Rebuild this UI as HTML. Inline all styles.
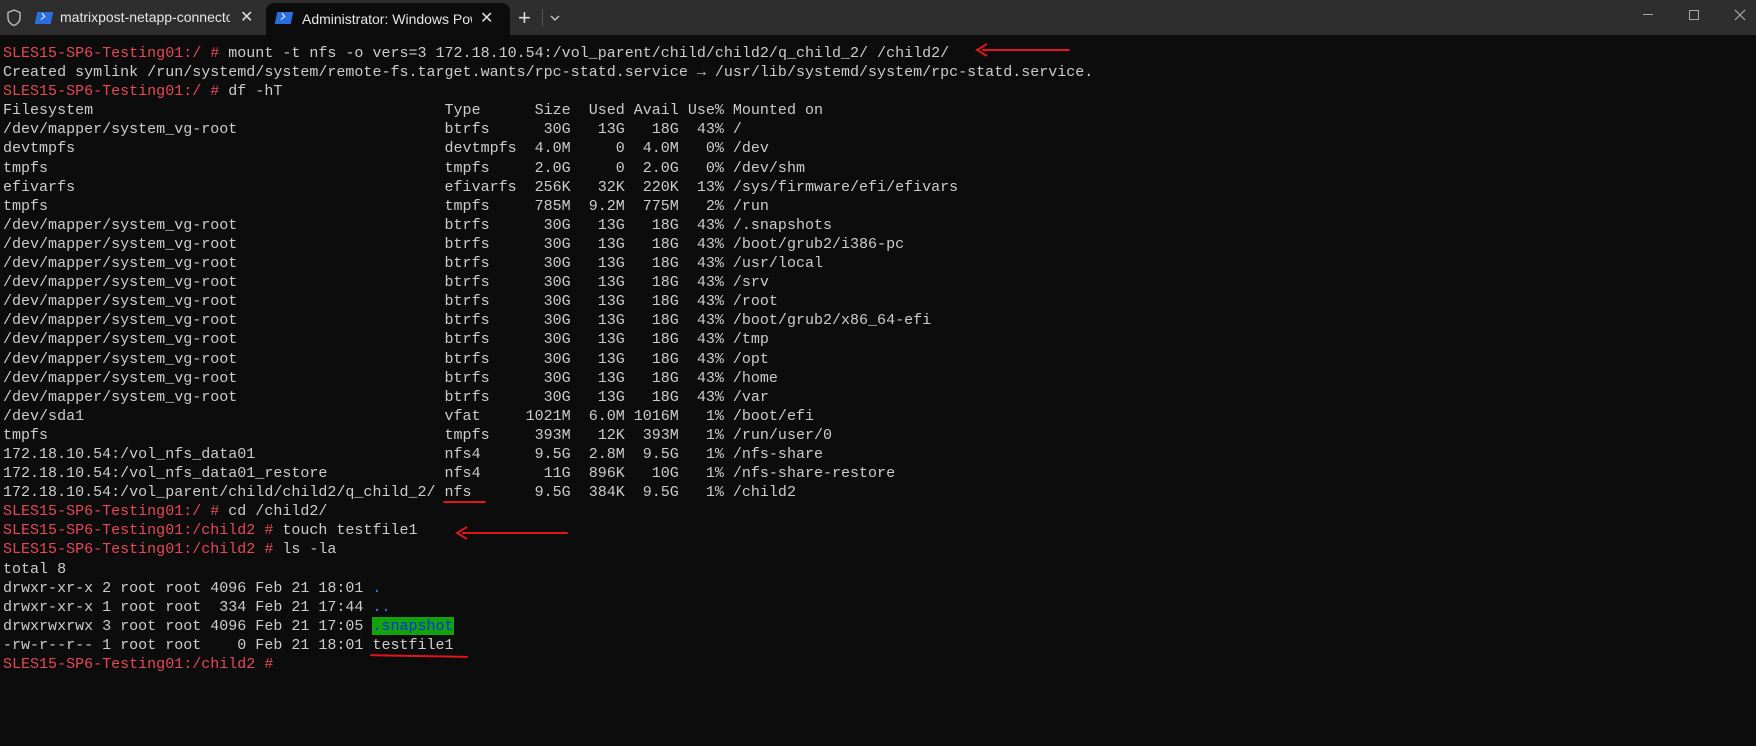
<!DOCTYPE html><html><head><meta charset="utf-8"><style>
body{margin:0;width:1756px;height:746px;background:#0c0c0c;overflow:hidden;font-family:"Liberation Sans",sans-serif;position:relative}
.bar{position:absolute;left:0;top:0;width:1756px;height:35px;background:#2e2e2e}
.tab{position:absolute;top:0;height:35px;color:#e6e6e6;font-size:14px;line-height:35px}
.act{background:#0c0c0c;border-radius:8px 8px 0 0;top:3px;height:32px;line-height:32px}
.ps{position:absolute;width:16px;height:12px;background:#2a6de0;transform:skewX(-12deg);top:12px}
.ps:after{content:"";position:absolute;left:3px;top:2px;width:4px;height:4px;border-right:1.5px solid #fff;border-bottom:1.5px solid #fff;transform:rotate(-45deg)}
pre{position:absolute;left:3px;top:44px;margin:0;font-family:"Liberation Mono",monospace;font-size:15.02px;line-height:19.1px;color:#cccccc}
.r{color:#e74856}.b{color:#3b78ff}.s{background:#13a10e;color:#0037da}
.ann{position:absolute;background:#e0151b;height:2px;border-radius:1px}
</style></head><body>
<div class="bar"></div>
<svg style="position:absolute;left:6px;top:9px" width="16" height="18" viewBox="0 0 16 18"><path d="M8 1L2 3.5V9c0 3.5 2.6 6.3 6 7.5 3.4-1.2 6-4 6-7.5V3.5z" fill="none" stroke="#bbb" stroke-width="1.4"/></svg>
<div class="tab" style="left:34px;width:228px"><div class="ps" style="left:2px"></div><span style="position:absolute;left:26px;white-space:nowrap;width:170px;overflow:hidden">matrixpost-netapp-connector(</span><span style="position:absolute;left:206px;color:#ddd;font-size:16px">✕</span></div>
<div class="tab act" style="left:266px;width:244px"><div class="ps" style="left:10px;top:9px"></div><span style="position:absolute;left:36px;white-space:nowrap;width:170px;overflow:hidden">Administrator: Windows Powe</span><span style="position:absolute;left:214px;color:#ddd;font-size:16px">✕</span></div>
<div class="tab" style="left:518px;font-size:22px;color:#ddd">+</div>
<div style="position:absolute;left:542px;top:9px;width:1px;height:18px;background:#555"></div>
<svg style="position:absolute;left:550px;top:14px" width="10" height="8"><path d="M1 2l4 4 4-4" fill="none" stroke="#ccc" stroke-width="1.3"/></svg>
<div style="position:absolute;left:1643px;top:14px;width:10px;height:1px;background:#aaa"></div>
<div style="position:absolute;left:1689px;top:10px;width:8px;height:8px;border:1px solid #aaa"></div>
<svg style="position:absolute;left:1734px;top:9px" width="12" height="12"><path d="M1 1l10 10M11 1L1 11" stroke="#aaa" stroke-width="1.2"/></svg>
<pre><span class="r">SLES15-SP6-Testing01:/ #</span> mount -t nfs -o vers=3 172.18.10.54:/vol_parent/child/child2/q_child_2/ /child2/
Created symlink /run/systemd/system/remote-fs.target.wants/rpc-statd.service → /usr/lib/systemd/system/rpc-statd.service.
<span class="r">SLES15-SP6-Testing01:/ #</span> df -hT
Filesystem                                       Type      Size  Used Avail Use% Mounted on
/dev/mapper/system_vg-root                       btrfs      30G   13G   18G  43% /
devtmpfs                                         devtmpfs  4.0M     0  4.0M   0% /dev
tmpfs                                            tmpfs     2.0G     0  2.0G   0% /dev/shm
efivarfs                                         efivarfs  256K   32K  220K  13% /sys/firmware/efi/efivars
tmpfs                                            tmpfs     785M  9.2M  775M   2% /run
/dev/mapper/system_vg-root                       btrfs      30G   13G   18G  43% /.snapshots
/dev/mapper/system_vg-root                       btrfs      30G   13G   18G  43% /boot/grub2/i386-pc
/dev/mapper/system_vg-root                       btrfs      30G   13G   18G  43% /usr/local
/dev/mapper/system_vg-root                       btrfs      30G   13G   18G  43% /srv
/dev/mapper/system_vg-root                       btrfs      30G   13G   18G  43% /root
/dev/mapper/system_vg-root                       btrfs      30G   13G   18G  43% /boot/grub2/x86_64-efi
/dev/mapper/system_vg-root                       btrfs      30G   13G   18G  43% /tmp
/dev/mapper/system_vg-root                       btrfs      30G   13G   18G  43% /opt
/dev/mapper/system_vg-root                       btrfs      30G   13G   18G  43% /home
/dev/mapper/system_vg-root                       btrfs      30G   13G   18G  43% /var
/dev/sda1                                        vfat     1021M  6.0M 1016M   1% /boot/efi
tmpfs                                            tmpfs     393M   12K  393M   1% /run/user/0
172.18.10.54:/vol_nfs_data01                     nfs4      9.5G  2.8M  9.5G   1% /nfs-share
172.18.10.54:/vol_nfs_data01_restore             nfs4       11G  896K   10G   1% /nfs-share-restore
172.18.10.54:/vol_parent/child/child2/q_child_2/ nfs       9.5G  384K  9.5G   1% /child2
<span class="r">SLES15-SP6-Testing01:/ #</span> cd /child2/
<span class="r">SLES15-SP6-Testing01:/child2 #</span> touch testfile1
<span class="r">SLES15-SP6-Testing01:/child2 #</span> ls -la
total 8
drwxr-xr-x 2 root root 4096 Feb 21 18:01 <span class="b">.</span>
drwxr-xr-x 1 root root  334 Feb 21 17:44 <span class="b">..</span>
drwxrwxrwx 3 root root 4096 Feb 21 17:05 <span class="s">.snapshot</span>
-rw-r--r-- 1 root root    0 Feb 21 18:01 testfile1
<span class="r">SLES15-SP6-Testing01:/child2 #</span></pre>
<div class="ann" style="left:982px;top:49px;width:88px"></div>
<svg style="position:absolute;left:975px;top:42px" width="14" height="16"><path d="M12 2L2 8l10 6" fill="none" stroke="#e0151b" stroke-width="2"/></svg>
<div class="ann" style="left:462px;top:532px;width:106px"></div>
<svg style="position:absolute;left:455px;top:525px" width="14" height="16"><path d="M12 2L2 8l10 6" fill="none" stroke="#e0151b" stroke-width="2"/></svg>
<div class="ann" style="left:443px;top:501px;width:43px"></div>
<div class="ann" style="left:370px;top:655px;width:98px;transform:rotate(1deg)"></div>
</body></html>
